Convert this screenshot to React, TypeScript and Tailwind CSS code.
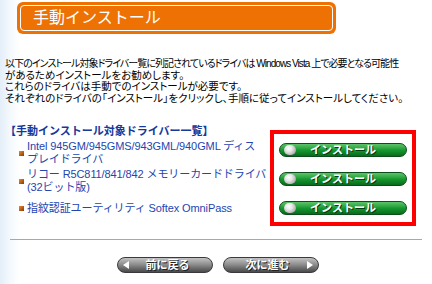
import React from 'react'

const drivers = [
  { lines: ['Intel 945GM/945GMS/943GML/940GML ディス', 'プレイドライバ'] },
  { lines: ['リコー R5C811/841/842 メモリーカードドライバ', '(32ビット版)'] },
  { lines: ['指紋認証ユーティリティ Softex OmniPass'] },
]

function InstallButton() {
  return (
    <button className="relative flex h-[14px] w-[128px] items-center rounded-full border border-[#0b4d18] bg-gradient-to-b from-[#5cc46a] via-[#159a30] to-[#0a6a1c]">
      {/* white ball on the left */}
      <span className="absolute left-[4px] top-[1px] h-[10px] w-[12px] rounded-full bg-[radial-gradient(circle_at_40%_35%,#ffffff_0%,#e6e6e6_35%,#8a8a8a_100%)]" />
      <span className="w-full text-center text-[11px] font-bold leading-[12px] text-white [text-shadow:1px_1px_0_#033a10]">
        インストール
      </span>
    </button>
  )
}

function NavButton({ label, dir }: { label: string; dir: 'prev' | 'next' }) {
  return (
    <button className="flex h-[16px] w-[96px] items-center rounded-full border border-[#3a3a3a] bg-gradient-to-b from-[#c4c4c4] via-[#8a8a8a] to-[#4a4a4a] px-[5px]">
      {dir === 'prev' && (
        <span className="h-0 w-0 border-y-[4px] border-r-[6px] border-y-transparent border-r-white" />
      )}
      <span className="flex-1 text-center text-[11px] font-bold leading-[12px] text-white [text-shadow:1px_1px_0_#222]">
        {label}
      </span>
      {dir === 'next' && (
        <span className="h-0 w-0 border-y-[4px] border-l-[6px] border-y-transparent border-l-white" />
      )}
    </button>
  )
}

export default function App() {
  return (
    <div className="h-[284px] w-[432px] overflow-hidden bg-white bg-[linear-gradient(to_right,#e3eef8_0px,#f4f9fd_10px,#ffffff_20px)] font-['Liberation_Sans','Noto_Sans_CJK_JP',sans-serif]">
      {/* title bar */}
      <div className="ml-[17px] mt-[2px] h-[32px] w-[319px] rounded-[6px] bg-[#ee7203] p-[3px]">
        <div className="flex h-full items-center rounded-[4px] border border-white pl-[12px]">
          <span className="text-[16px] leading-none text-white">手動インストール</span>
        </div>
      </div>

      {/* intro */}
      <div className="mt-[24px] pl-[5px] text-[10.5px] leading-[11.5px] text-black [font-feature-settings:'palt']">
        <p className="whitespace-nowrap text-[10px] tracking-[-0.95px]">以下のインストール対象ドライバー覧に列記されているドライバは Windows Vista 上で必要となる可能性</p>
        <p className="whitespace-nowrap">があるためインストールをお勧めします。</p>
        <p className="whitespace-nowrap">これらのドライバは手動でのインストールが必要です。</p>
        <p className="whitespace-nowrap">それぞれのドライバの「インストール」をクリックし、手順に従ってインストールしてください。</p>
      </div>

      {/* driver list */}
      <div className="mt-[20px] flex items-start pl-[5px]">
        <div className="w-[265px]">
          <h2 className="whitespace-nowrap text-[11px] font-bold leading-[14px] text-[#16389a]">【手動インストール対象ドライバー一覧】</h2>
          <ul className="mt-[2px] flex flex-col gap-[8px] pl-[14px]">
            {drivers.map((d, i) => (
              <li key={i} className={i === 0 ? 'mb-[-6px] flex items-center gap-[3px]' : 'flex items-center gap-[3px]'}>
                <span className="h-[5px] w-[5px] shrink-0 bg-gradient-to-br from-[#f08a30] to-[#8a3a00]" />
                <div className="text-[11px] leading-[13px] text-[#2445b0]">
                  {d.lines.map((l) => (
                    <div key={l} className="whitespace-nowrap tracking-[-0.1px]">{l}</div>
                  ))}
                </div>
              </li>
            ))}
          </ul>
        </div>
        <div className="mt-[6px] flex h-[96px] w-[146px] flex-col items-center gap-[15px] border-[4px] border-[#ff0000] pt-[9px]">
          <InstallButton />
          <InstallButton />
          <InstallButton />
        </div>
      </div>

      {/* footer */}
      <div className="mx-[10px] mt-[13px] h-px bg-[#a8a8a8]" />
      <div className="mt-[17px] flex justify-center gap-[10px] pl-[3px]">
        <NavButton label="前に戻る" dir="prev" />
        <NavButton label="次に進む" dir="next" />
      </div>
    </div>
  )
}
